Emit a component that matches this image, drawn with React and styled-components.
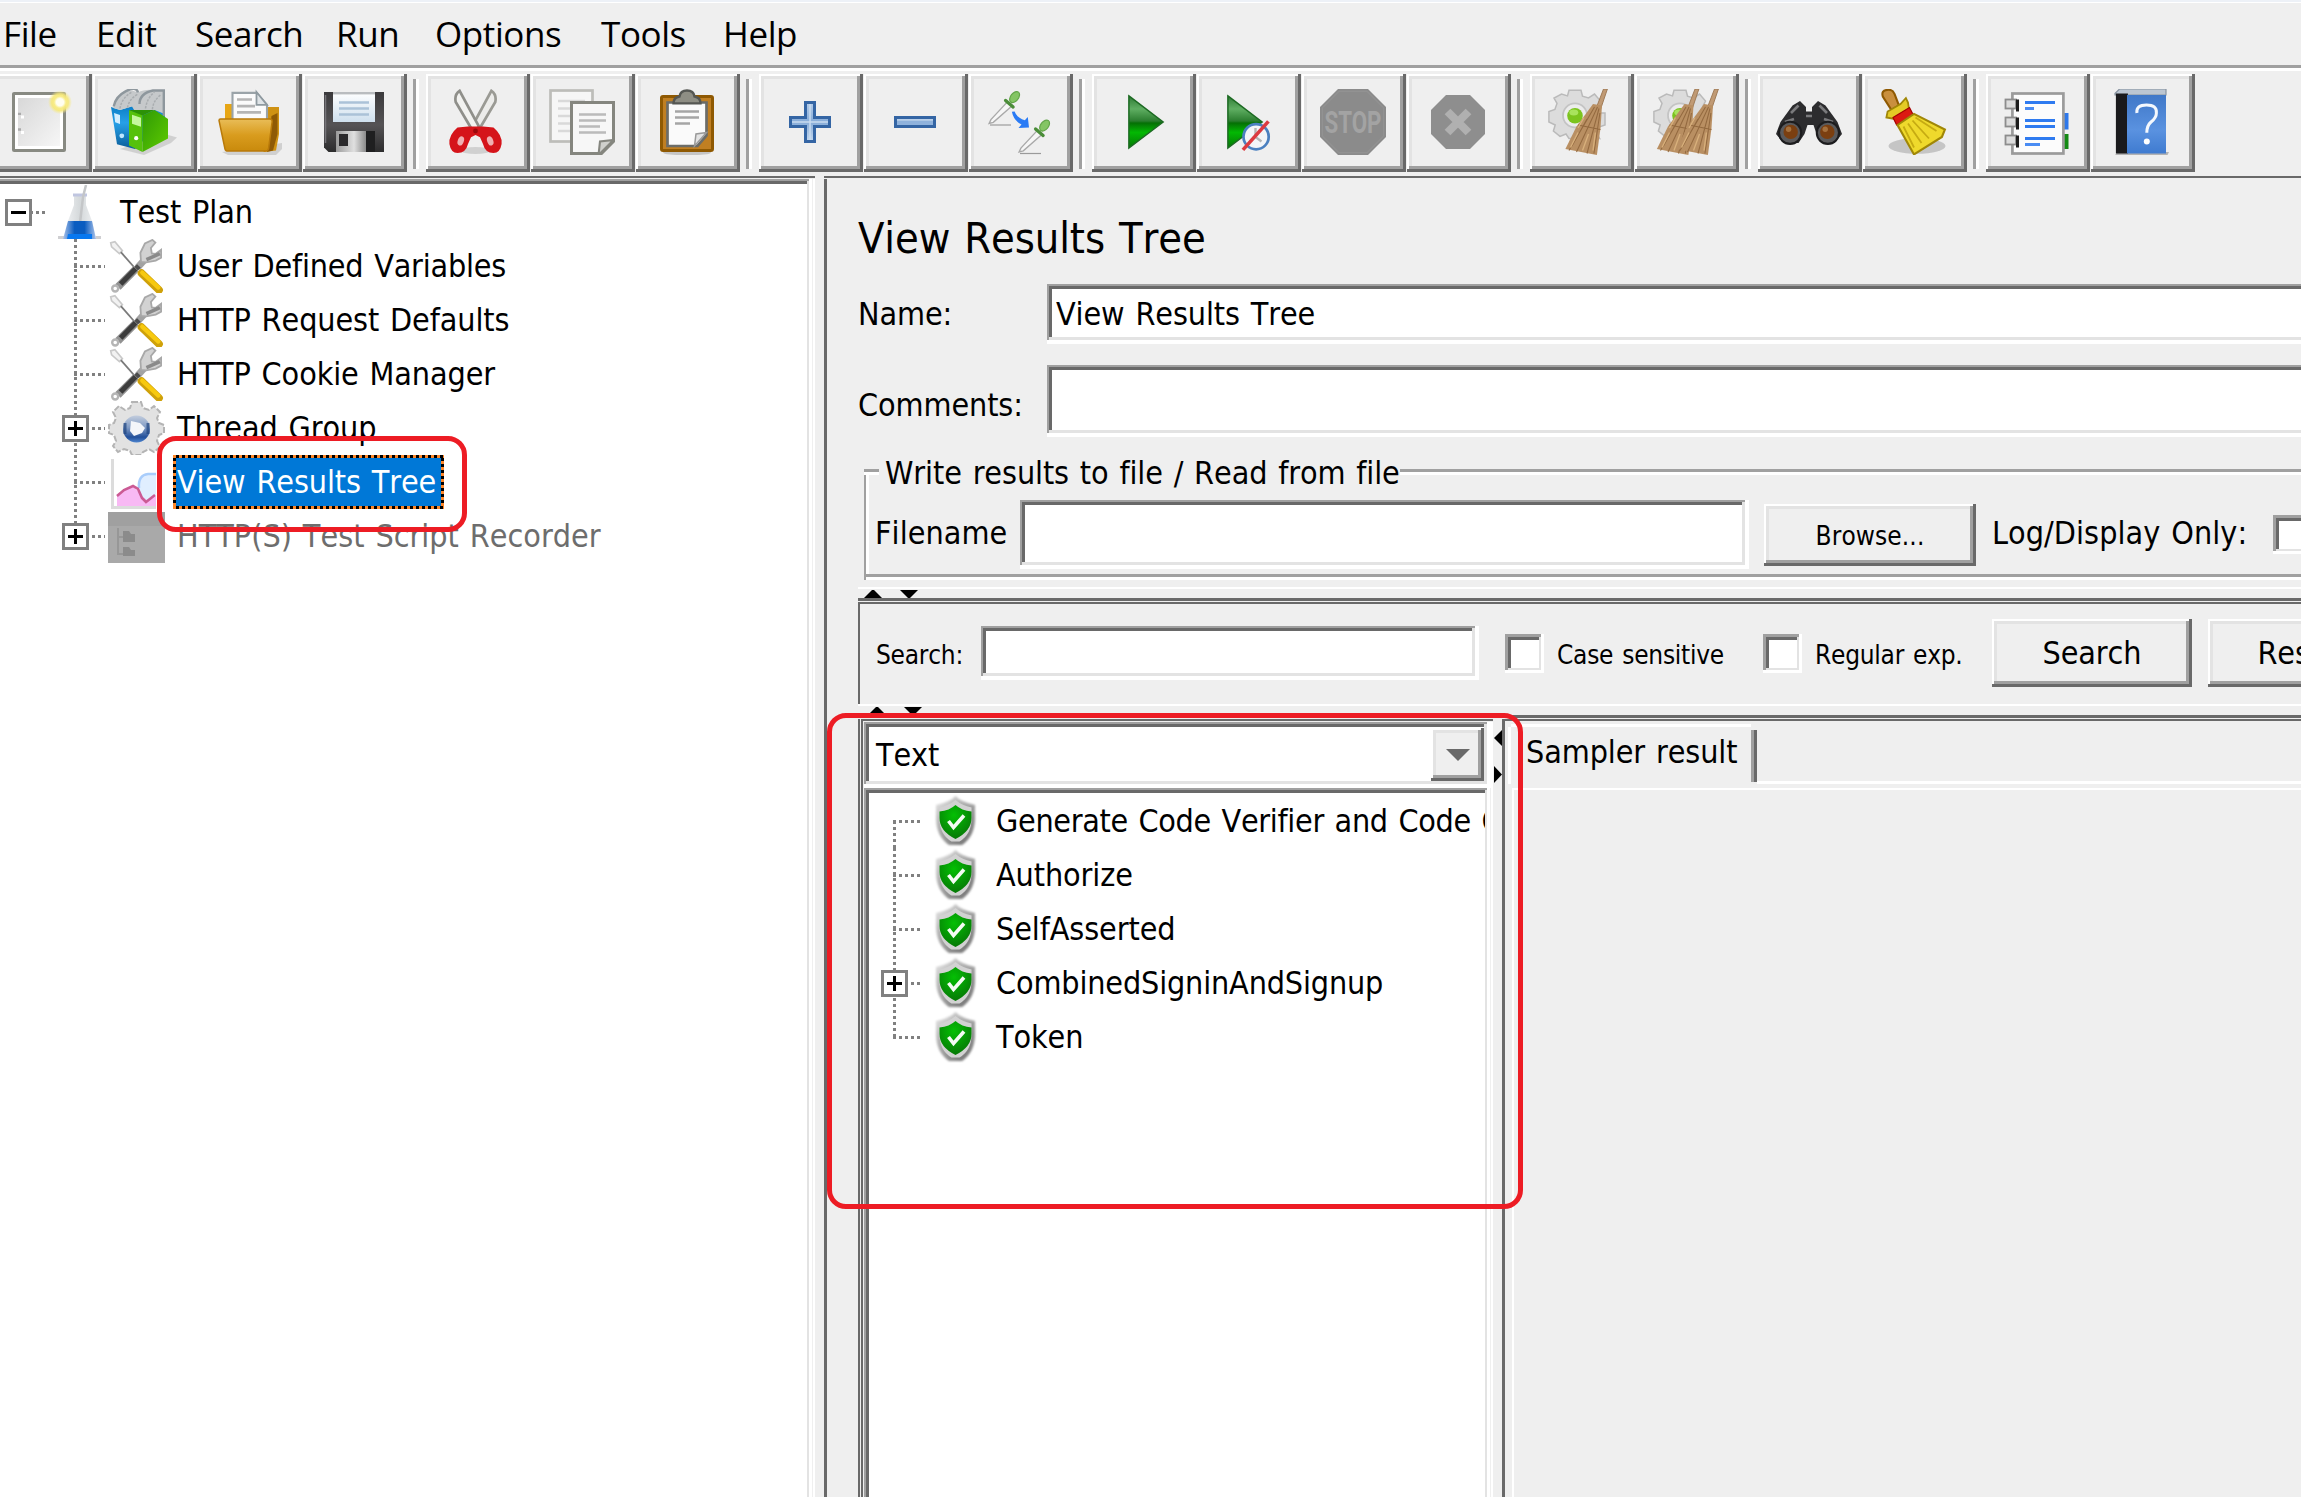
import React from "react";
import styled, { createGlobalStyle, css } from "styled-components";

const C = {
  face: "#efefef",
  light: "#ffffff",
  soft: "#e3e3e3",
  mid: "#a0a0a0",
  dark: "#696969",
  line: "#808080",
  red: "#ed1c24",
  select: "#0078d7",
};

const raised = css`
  background: ${C.face};
  box-shadow: inset -3px -3px 0 ${C.dark}, inset 2px 2px 0 ${C.light},
    inset -6px -6px 0 ${C.mid}, inset 5px 5px 0 ${C.soft};
`;
const sunken = css`
  background: #fff;
  box-shadow: inset -4px -4px 0 ${C.light}, inset 2px 2px 0 ${C.mid},
    inset -7px -7px 0 ${C.soft}, inset 5px 5px 0 ${C.dark};
`;

const Global = createGlobalStyle`
  html, body { margin: 0; padding: 0; background: #fff; overflow: hidden; }
  * { box-sizing: border-box; }
  svg { display: block; flex: none; }
`;

const Window = styled.div`
  width: 2301px;
  height: 1497px;
  overflow: hidden;
  display: flex;
  flex-direction: column;
  background: ${C.face};
  color: #000;
  font: 32px/54px "DejaVu Sans Condensed", "DejaVu Sans", sans-serif;
  font-stretch: condensed;
  font-kerning: none;
  letter-spacing: -0.1px;
  word-spacing: 1.8px;
  white-space: pre;
`;

/* ---------- menu ---------- */
const MenuBar = styled.nav`
  height: 71px;
  flex: none;
  display: flex;
  border-top: 2px solid #edf1f7;
  box-shadow: inset 0 1px 0 #fff, inset 0 -3px 0 #fff, inset 0 -6px 0 ${C.mid};
  font: 35px/63px "Open Sans", "Noto Sans", sans-serif;
  letter-spacing: -0.4px;
  padding-left: 3px;
`;
const MenuItem = styled.span`
  width: ${(p) => p.$w}px;
  flex: none;
`;

/* ---------- toolbar ---------- */
const ToolBar = styled.div`
  height: 105px;
  flex: none;
  display: flex;
  align-items: flex-start;
  padding-top: 3px;
  margin-left: -12px;
`;
const ToolGroup = styled.div`
  display: flex;
  gap: 1px;
`;
const ToolButton = styled.button`
  ${raised}
  width: 104px;
  height: 98px;
  border: 0;
  padding: 15px 20px 17px 18px;
`;
const ToolSeparator = styled.div`
  width: 6px;
  height: 90px;
  margin: 5px 7px 0 6px;
  background: linear-gradient(90deg, ${C.mid} 50%, #fff 50%);
`;

/* ---------- main split ---------- */
const Main = styled.div`
  flex: 1;
  display: flex;
  gap: 9px;
  min-height: 0;
`;
const TreePane = styled.div`
  width: 815px;
  flex: none;
  border-top: 2px solid ${C.dark};
  padding-top: 1px;
`;
const TreeScroll = styled.div`
  height: 100%;
  background: #fff;
  padding-top: 6px;
  box-shadow: inset -2px 0 0 #fff, inset -3px 0 0 ${C.face}, inset -6px 0 0 #fff,
    inset 0 2px 0 ${C.mid}, inset -8px 0 0 ${C.soft}, inset 0 5px 0 ${C.dark};
`;
const dots = (dir) =>
  `repeating-linear-gradient(${dir}, ${C.line} 0 3px, transparent 3px 6px)`;
const TreeRow = styled.div`
  height: 54px;
  display: flex;
  align-items: center;
  padding-left: ${(p) => p.$indent || 0}px;
`;
const Gutter = styled.div`
  width: ${(p) => p.$w}px;
  height: 54px;
  flex: none;
  display: flex;
  align-items: center;
  background-repeat: no-repeat;
  background-image: ${dots("90deg")}, ${dots("180deg")};
  background-size: ${(p) => p.$reach}px 3px,
    3px ${(p) => (p.$part === "none" ? "0" : p.$part ? "27px" : "54px")};
  background-position: 12px 26px, 12px ${(p) => (p.$part === "first" ? "27px" : "0")};
`;
const Expander = styled.span`
  width: 27px;
  height: 27px;
  border: 3px solid ${C.line};
  background: linear-gradient(#000, #000) center / 15px 3px no-repeat,
    ${(p) => (p.$open ? "" : "linear-gradient(#000, #000) center / 3px 15px no-repeat,")}
    linear-gradient(#fff, #fff);
`;
const RootGutter = styled(Gutter)`
  background-position: 13px 26px, 0 0;
`;
const NodeLabel = styled.span`
  margin-left: ${(p) => p.$gap ?? 8}px;
  padding: 0 3px 0 4px;
  height: 54px;
  color: ${(p) => (p.$muted ? "#6d6d6d" : "#000")};
  letter-spacing: ${(p) => (p.$ls === undefined ? "inherit" : p.$ls + "px")};
`;
const ddash = (dir) =>
  `repeating-linear-gradient(${dir}, #ff8728 0 3px, #000 3px 6px)`;
const SelectedLabel = styled(NodeLabel)`
  color: #fff;
  width: 271px;
  background: ${ddash("90deg")} 0 0 / 100% 3px no-repeat,
    ${ddash("90deg")} 0 100% / 100% 3px no-repeat,
    ${ddash("180deg")} 0 0 / 3px 100% no-repeat,
    ${ddash("180deg")} 100% 0 / 3px 100% no-repeat, ${C.select};
`;

/* ---------- detail pane ---------- */
const Detail = styled.main`
  flex: 1;
  min-width: 0;
  overflow: hidden;
  border-top: 2px solid ${C.dark};
  display: flex;
`;
const DetailEdge = styled.div`
  width: 3px;
  margin: 1px 31px 0 0;
  background: ${C.dark};
  flex: none;
`;
const DetailBody = styled.div`
  flex: 1;
  min-width: 0;
  display: flex;
  flex-direction: column;
`;
const Title = styled.h1`
  margin: 30px 0 16px;
  font: inherit;
  font-kerning: none;
  font-size: 43px;
  line-height: 60px;
`;
const FormRow = styled.div`
  display: flex;
  align-items: center;
  height: ${(p) => p.$h}px;
  margin-bottom: ${(p) => p.$mb}px;
  flex: none;
`;
const FormLabel = styled.label`
  width: 189px;
  flex: none;
  padding-top: ${(p) => p.$drop || 0}px;
`;
const Field = styled.div`
  ${sunken}
  height: ${(p) => p.$h}px;
  width: ${(p) => (p.$w ? p.$w + "px" : "auto")};
  flex: ${(p) => (p.$w ? "none" : "1")};
  margin-right: ${(p) => p.$mr ?? (p.$w ? 0 : -20)}px;
  padding-left: 9px;
  line-height: ${(p) => p.$h}px;
`;
const Group = styled.section`
  margin: 0 -20px 0 6px;
  flex: none;
`;
const GroupHead = styled.div`
  display: flex;
  height: 6px;
  line-height: 9px;
`;
const Rule = styled.span`
  height: 6px;
  width: ${(p) => (p.$w ? p.$w + "px" : "auto")};
  flex: ${(p) => (p.$w ? "none" : "1")};
  background: linear-gradient(${C.mid} 50%, #fff 50%);
`;
const GroupTitle = styled.span`
  width: 521px;
  flex: none;
  padding-left: 6px;
`;
const GroupBody = styled.div`
  height: 105px;
  border-left: 2px solid ${C.mid};
  box-shadow: inset 0 -3px 0 #fff, inset 0 -6px 0 ${C.mid}, inset 3px 0 0 #fff;
  padding: 25px 0 11px 9px;
  display: flex;
  align-items: center;
`;
const Cell = styled.span`
  width: ${(p) => p.$w}px;
  flex: none;
  font-size: ${(p) => (p.$small ? 26 : 32)}px;
  padding: ${(p) => (p.$small ? "4px 0 0" : "0 0 3px")};
  letter-spacing: ${(p) => (p.$small ? -0.25 : 0.05)}px;
`;
const PushButton = styled.button`
  ${raised}
  width: ${(p) => p.$w}px;
  height: ${(p) => p.$h}px;
  flex: none;
  border: 0;
  padding: ${(p) => (p.$small ? 3 : 0)}px 0 0;
  margin-right: ${(p) => p.$mr}px;
  font: inherit;
  font-kerning: none;
  font-size: ${(p) => (p.$small ? 26 : 32)}px;
  line-height: 54px;
  letter-spacing: ${(p) => (p.$small ? 0.1 : -0.1)}px;
  color: #000;
`;
const Check = styled.span`
  width: 39px;
  height: 39px;
  flex: none;
  margin-right: ${(p) => p.$mr || 0}px;
  background: #fff;
  box-shadow: inset -3px -3px 0 #fff, inset 3px 3px 0 ${C.mid},
    inset -5px -5px 0 ${C.soft}, inset 6px 6px 0 ${C.dark};
`;
const Splitter = styled.div`
  height: ${(p) => p.$h}px;
  flex: none;
  display: flex;
  align-items: flex-end;
  border-bottom: 3px solid ${C.dark};
  padding-left: ${(p) => p.$pad}px;
  margin-bottom: 1px;
  background: linear-gradient(#fff, #fff) 0 ${(p) => p.$line}px / 100% 2px no-repeat;
`;
const SearchBar = styled.div`
  height: 102px;
  flex: none;
  border-top: 2px solid ${C.dark};
  border-left: 2px solid ${C.dark};
  margin-right: -20px;
  padding: 0 0 2px 16px;
  display: flex;
  align-items: center;
`;
const Results = styled.div`
  flex: 1;
  min-height: 0;
  display: flex;
  border-left: 2px solid ${C.dark};
  padding-left: 1px;
`;
const ResultList = styled.div`
  width: 632px;
  flex: none;
  border-top: 2px solid ${C.dark};
  border-left: 2px solid ${C.dark};
  padding: 1px 0 0 1px;
  display: flex;
  flex-direction: column;
`;
const Combo = styled.div`
  ${sunken}
  box-shadow: inset -6px -4px 0 #fff, inset 2px 2px 0 ${C.mid},
    inset -9px -7px 0 ${C.soft}, inset 5px 5px 0 ${C.dark};
  height: 66px;
  flex: none;
  padding: 6px 9px 7px 12px;
  display: flex;
  justify-content: space-between;
`;
const ComboButton = styled.span`
  ${raised}
  width: 53px;
  height: 53px;
  display: flex;
  align-items: center;
  justify-content: center;
`;
const ResultTree = styled.div`
  flex: 1;
  background: #fff;
  padding: 6px 0 0;
  margin-bottom: -8px;
  box-shadow: inset -2px 0 0 #fff, inset -3px 0 0 ${C.face}, inset -6px 0 0 #fff,
    inset 2px 0 0 ${C.mid}, inset 0 2px 0 ${C.mid}, inset -8px 0 0 ${C.soft},
    inset 5px 5px 0 ${C.dark};
`;
const ResultClip = styled.div`
  width: 621px;
  overflow: hidden;
`;
const SideSplitter = styled.div`
  width: 9px;
  flex: none;
  padding: 11px 0 0 1px;
  display: flex;
  flex-direction: column;
  gap: 19px;
`;
const Sampler = styled.div`
  flex: 1;
  min-width: 0;
  border-top: 2px solid ${C.dark};
  border-left: 3px solid ${C.dark};
  padding: 3px 0 0 3px;
  display: flex;
  flex-direction: column;
`;
const TabStrip = styled.div`
  display: flex;
  height: 60px;
  flex: none;
`;
const Tab = styled.div`
  width: 249px;
  flex: none;
  padding: 1px 0 0 18px;
  background: linear-gradient(#fff, #fff) 3px 0 / 240px 3px no-repeat,
    linear-gradient(#fff, #fff) 0 3px / 3px 100% no-repeat,
    linear-gradient(90deg, ${C.mid} 50%, ${C.dark} 50%) 243px 6px / 6px 52px no-repeat;
`;
const TabRest = styled.div`
  flex: 1;
  border-bottom: 3px solid #fff;
`;
const TabBody = styled.div`
  flex: 1;
  margin: 4px 0 0 4px;
  border-top: 2px solid #fff;
  border-left: 2px solid #fff;
`;
const Callout = styled.div`
  position: absolute;
  left: ${(p) => p.$x}px;
  top: ${(p) => p.$y}px;
  width: ${(p) => p.$w}px;
  height: ${(p) => p.$h}px;
  border: 5px solid ${C.red};
  border-radius: 19px;
`;

/* ---------- toolbar artwork, 22-unit grid ---------- */
const Art = ({ children }) => (
  <svg width="66" height="66" viewBox="0 0 22 22">{children}</svg>
);
const NewIcon = () => (
  <Art>
    <defs>
      <linearGradient id="pg" x1="0" y1="0" x2="1" y2="1"><stop offset="0" stopColor="#d8d8d8" /><stop offset="1" stopColor="#f6f6f6" /></linearGradient>
      <radialGradient id="glow"><stop offset="0.3" stopColor="#fffef0" /><stop offset="0.5" stopColor="#f8ec86" /><stop offset="0.7" stopColor="#f6e878" stopOpacity="0.9" /><stop offset="1" stopColor="#f6ea8a" stopOpacity="0" /></radialGradient>
    </defs>
    <rect x="2.5" y="1.5" width="17" height="19" fill="#fff" stroke="#888a82" rx="0.2" />
    <rect x="4" y="3" width="14" height="16" fill="url(#pg)" />
    <path d="M4 8.3h1M4 13.5h1" stroke="#aaa" strokeWidth="0.8" />
    <path d="M5 9.3h1M5 14.5h1" stroke="#fff" strokeWidth="1" />
    <circle cx="18" cy="4.4" r="4" fill="url(#glow)" />
  </Art>
);
const TemplatesIcon = () => (
  <Art>
    <defs>
      <linearGradient id="gr" x1="0" y1="0" x2="1" y2="1"><stop offset="0" stopColor="#2f9a05" /><stop offset="1" stopColor="#5fcb00" /></linearGradient>
      <linearGradient id="bl" x1="0" y1="0" x2="0" y2="1"><stop offset="0" stopColor="#0a7cc4" /><stop offset="0.4" stopColor="#27a0e8" /><stop offset="1" stopColor="#0b5d99" /></linearGradient>
    </defs>
    <path d="M18 15l4 1.2-2 1.8-9 4-8-2z" fill="#999" opacity="0.35" />
    <path d="M0 6l3 1 5-1.6 4 1 6-1V10L8 20l-6-1.6z" fill="url(#bl)" />
    <path d="M.7 6.300Q1 3 4.500.6 7 .2 9 1.200 11 0 14.500.3h3V8.200L14.500 7 10.500 8.500 8 7.500 7 5.800 3 7z" fill="#c6c9cb" />
    <path d="M.9 5.800Q1.500 2.500 5 .7T9 1.200M9.500 5Q9.500 1.500 14 .5h3.600V9" stroke="#8e979d" strokeWidth="0.800" fill="none" />
    <path d="M3 6.500Q3.500 3 7 1M5.500 6.200Q6 3.500 8.800 1.800M11.500 6.500Q12 3 14.500 1M13.800 6.800Q14 4 16.500 2" stroke="#a9adb0" strokeWidth="0.500" fill="none" strokeDasharray=".8 .4" />
    <path d="M1 8l2 .7v3l-1.600-.6z" fill="#d2eeff" />
    <circle cx="3.600" cy="15.600" r="0.800" fill="#bfe6ff" />
    <path d="M6 7l4.500 1.500V21L6 18.800z" fill="#55c10c" />
    <path d="M7 8.600l3 1v3l-3-1z" fill="#c4f7a0" />
    <circle cx="8.400" cy="16.400" r="0.700" fill="#fff" />
    <path d="M6 7l8.500 0L10.500 8.800z" fill="#2c9206" />
    <path d="M10.500 8.800l4-1.800 4.500 3v6.500L10.500 21z" fill="url(#gr)" />
  </Art>
);
const OpenIcon = () => (
  <Art>
    <defs>
      <linearGradient id="fo" x1="0" y1="0" x2="0" y2="1"><stop offset="0" stopColor="#e9bd58" /><stop offset="0.5" stopColor="#d99c1e" /><stop offset="1" stopColor="#c98a0c" /></linearGradient>
    </defs>
    <path d="M2 21l2 1h16l2-2v-2z" fill="#888" opacity="0.3" />
    <path d="M3 5h3v5h8V6h7v9l-1 5.500-4 .5z" fill="#cf9213" />
    <path d="M3 5h2.500v5H3z" fill="#e7a615" />
    <path d="M18.500 9l2-1v7l-1.500 5.500-2 .5z" fill="#8f5a05" />
    <path d="M5.500 1.300h8l3.500 4V11H5.500z" fill="#fbfbfb" stroke="#9aa3a8" strokeWidth="0.700" />
    <path d="M13.500 1v4.300H17z" fill="#dfe4e7" stroke="#8f9aa0" strokeWidth="0.600" />
    <path d="M7 3.500h5M7 5.700h6M7 7.800h8" stroke="#b5b5b5" strokeWidth="0.900" />
    <path d="M1 10.500q0-.5.500-.5h16.500q.8 0 .7 1l-1.200 9q-.2.700-1 .7H4q-.8 0-1-.7z" fill="url(#fo)" stroke="#b97a0a" strokeWidth="0.500" />
  </Art>
);
const SaveIcon = () => (
  <Art>
    <defs>
      <linearGradient id="sv" x1="0" y1="0" x2="0" y2="1"><stop offset="0" stopColor="#3b3a3c" /><stop offset="0.550" stopColor="#555355" /><stop offset="1" stopColor="#2c2c2d" /></linearGradient>
      <linearGradient id="mt" x1="0" y1="0" x2="1" y2="0"><stop offset="0" stopColor="#9a9a9a" /><stop offset="0.600" stopColor="#e0e0e0" /><stop offset="1" stopColor="#8a8a8a" /></linearGradient>
      <linearGradient id="lb" x1="0" y1="0" x2="0" y2="1"><stop offset="0" stopColor="#fff" /><stop offset="1" stopColor="#cfe0ee" /></linearGradient>
    </defs>
    <path d="M1 1h20v20H2.500L1 19.500z" fill="url(#sv)" />
    <path d="M1.500 2v16" stroke="#77757a" strokeWidth="0.500" />
    <rect x="4" y="1" width="14" height="10" fill="url(#lb)" />
    <rect x="4" y="1" width="14" height="0.800" fill="#b9bcbf" />
    <path d="M6 4.500h10M6 6.500h10M6 8.500h10" stroke="#abc2d8" strokeWidth="0.900" />
    <rect x="5" y="14" width="10" height="7" fill="url(#mt)" />
    <rect x="6" y="15" width="3" height="4" fill="#2a292b" />
    <rect x="15" y="14" width="3" height="7" fill="#1f1f20" />
  </Art>
);
const CutIcon = () => (
  <Art>
    <ellipse cx="10.500" cy="20.500" rx="5" ry="1.200" fill="#999" opacity="0.350" />
    <path d="M15.800.6q1.800 1.200 1.300 3.700L11.400 14 9.300 12.600z" fill="#ececea" stroke="#9a9a94" strokeWidth="0.900" />
    <path d="M5.200.6Q3.400 1.800 3.900 4.300L9.600 14l2.100-1.400z" fill="#f2f2f0" stroke="#8f8f8a" strokeWidth="0.900" />
    <path d="M8 12.500h5l3.500 .3q3 2.500 2.700 5.500-.5 3-2.700 3-2.800 0-3.500-3l-1-2.200-1.500-.8-1.500.8-1 2.200q-.700 3-3.500 3-2.200 0-2.700-3-.3-3 2.700-5.500z" fill="#d5141a" />
    <ellipse cx="5.600" cy="17.300" rx="1" ry="1.600" fill="#efb0b2" transform="rotate(20 5.600 17.300)" />
    <ellipse cx="15.400" cy="17.300" rx="1" ry="1.600" fill="#efb0b2" transform="rotate(-20 15.400 17.300)" />
    <circle cx="10.500" cy="14" r="0.800" fill="#9c080c" />
  </Art>
);
const CopyIcon = () => (
  <Art>
    <rect x="0.500" y="0.500" width="14" height="17" fill="#f6f6f6" stroke="#bdbdb9" strokeWidth="0.900" />
    <path d="M3 4h9M3 6.500h9M3 9h4M3 11.500h4M3 14h4" stroke="#d9d9d9" strokeWidth="0.900" />
    <path d="M7.500 4.500h14v13l-4 4h-10z" fill="#f7f7f7" stroke="#85867f" />
    <path d="M10 8.500h9M10 10.500h9M10 12.500h7M10 14.500h9" stroke="#bbb" strokeWidth="0.800" />
    <path d="M16.500 22l.5-4.500 4.500-.5z" fill="#cfd0cc" stroke="#85867f" strokeWidth="0.700" />
  </Art>
);
const PasteIcon = () => (
  <Art>
    <ellipse cx="11" cy="21.200" rx="8" ry="0.900" fill="#888" opacity="0.400" />
    <rect x="2.500" y="2.500" width="17" height="18" rx="0.500" fill="#c07f22" stroke="#8f5902" />
    <path d="M4.500 4.500h13v11l-3 3.500h-10z" fill="#fafafa" stroke="#6b6c68" strokeWidth="0.900" />
    <path d="M7 7.500h8M7 9.500h8M7 11.500h5" stroke="#a5a5a5" strokeWidth="0.900" />
    <path d="M13.500 19l.5-4 3.500-.5z" fill="#e3e3e3" stroke="#999" strokeWidth="0.500" />
    <path d="M6.500 4.800q0-2 2-2.300 .3-2 2.500-2t2.500 2q2 .3 2 2.300z" fill="#8e8e84" stroke="#555753" strokeWidth="0.800" />
  </Art>
);
const PlusIcon = () => (
  <Art>
    <defs>
      <linearGradient id="pb" x1="0" y1="0" x2="0" y2="1"><stop offset="0" stopColor="#b4cce8" /><stop offset="0.500" stopColor="#87acd8" /><stop offset="1" stopColor="#c4d8ee" /></linearGradient>
    </defs>
    <path d="M9.500 4.500h3v5h5v3h-5v5h-3v-5h-5v-3h5z" fill="url(#pb)" stroke="#3465a4" />
    <path d="M11 5v12M5 11h12" stroke="#c9dbf0" strokeWidth="0.500" />
  </Art>
);
const MinusIcon = () => (
  <Art>
    <rect x="4.500" y="9.500" width="13" height="3" fill="#8fb2dc" stroke="#3465a4" />
    <path d="M5 10.300h12" stroke="#b9cfe9" strokeWidth="0.600" />
  </Art>
);
const Dropper = ({ x, y }) => (
  <g transform={`translate(${x} ${y})`}>
    <path d="M0.500 11.500h7" stroke="#9a9a9a" strokeWidth="0.400" />
    <path d="M6.300 3.800L.8 9.700 .2 11l1.400-.4L7.800 5.200z" fill="#f6f6f6" stroke="#a9a9a9" strokeWidth="0.450" />
    <path d="M5.700 3.300l2.500 2.200" stroke="#4a8c38" strokeWidth="1.100" strokeLinecap="round" />
    <ellipse cx="8.700" cy="2.200" rx="1.300" ry="2.100" transform="rotate(38 8.700 2.200)" fill="#84c564" stroke="#62a548" strokeWidth="0.400" />
  </g>
);
const ToggleIcon = () => (
  <Art>
    <Dropper x={0.5} y={0.500} />
    <Dropper x={10.500} y={10} />
    <path d="M8.300 7.600q.6 3 3.200 4.200l-1 1.200 3.500-.2-.4-3.500-1 1.100Q10 9.700 9.200 7.500z" fill="#2a7bf5" />
  </Art>
);
const greenDefs = (id) => (
  <linearGradient id={id} x1="0" y1="0" x2="0" y2="1"><stop offset="0" stopColor="#2f7a35" /><stop offset="0.250" stopColor="#5fae62" /><stop offset="0.480" stopColor="#2b7d2f" /><stop offset="0.520" stopColor="#057005" /><stop offset="0.700" stopColor="#03b803" /><stop offset="1" stopColor="#047804" /></linearGradient>
);
const RunIcon = () => (
  <Art>
    <defs>{greenDefs("g1")}</defs>
    <path d="M6.300 2.300L17.700 11 6.300 19.700z" fill="url(#g1)" stroke="#1c6a22" strokeWidth="0.500" />
  </Art>
);
const RunNowIcon = () => (
  <Art>
    <defs>{greenDefs("g2")}</defs>
    <path d="M4.300 2.300L15.700 11 4.300 19.700z" fill="url(#g2)" stroke="#1c6a22" strokeWidth="0.500" />
    <circle cx="13.700" cy="15.900" r="4.200" fill="#f3f5f8" stroke="#4b80c0" strokeWidth="0.900" />
    <path d="M13.500 13v3l2 1.500" stroke="#b5b5b5" strokeWidth="0.800" fill="none" />
    <path d="M9.300 20.300l8.500-9.500" stroke="#dc3a40" strokeWidth="1.200" />
  </Art>
);
const StopIcon = () => (
  <Art>
    <path d="M6 0h10l6 6v10l-6 6H6l-6-6V6z" fill="#8b8b8b" />
    <path d="M6.300.8h9.400l5.500 5.500v9.400l-5.500 5.500H6.300L.8 15.700V6.300z" fill="none" stroke="#929292" strokeWidth="0.400" />
    <text x="1.500" y="14.800" fontFamily="Roboto, sans-serif" fontWeight="700" fontSize="10.500" textLength="19" lengthAdjust="spacingAndGlyphs" letterSpacing="0" fill="#a3a3a3">STOP</text>
  </Art>
);
const ShutdownIcon = () => (
  <Art>
    <path d="M7 2h8l5 5v8l-5 5H7l-5-5V7z" fill="#8e8e8e" />
    <path d="M7.500 7.500l7 7M14.500 7.500l-7 7" stroke="#b0b0b0" strokeWidth="2.700" />
  </Art>
);
const Gear = () => (
  <g>
    <path d="M7 .4h4l.5 2 2 .6 2-1.300 2 2.300-1 2 .8 2H19v4l-2 .7-.8 2 1 1.800L14.500 16l-2-.8-1.500 1.300H7L6 15l-2 .8L1.800 14l.6-2L.3 11V7.500l2-.7.7-2L2 3l2.500-1.300 2 .6z" fill="#dcdcdc" stroke="#bababa" strokeWidth="0.500" />
    <circle cx="9" cy="8.800" r="4" fill="#ececec" stroke="#c4c4c4" strokeWidth="0.600" />
    <circle cx="9" cy="8.900" r="2.600" fill="#7cc41e" />
    <ellipse cx="8.600" cy="7.800" rx="1.500" ry="1" fill="#a9e35d" />
  </g>
);
const Besom = ({ x = 0 }) => (
  <g transform={`translate(${x} 0)`}>
    <path d="M19.800 0h-1.300L16 6.500l1.500.3z" fill="#c09a74" stroke="#9a7550" strokeWidth="0.300" />
    <path d="M15 5l3 .5L17.500 13 16.300 22 5.800 20 9.500 12.500z" fill="#b98f62" />
    <path d="M10 12l7.500 1.500M15.500 6L7 20.500M16.500 6l-7 15M17 6.500l-4 15M17.300 8l-2 13.500M13 10l-5 9" stroke="#93693f" strokeWidth="0.340" fill="none" />
    <path d="M10 14.500l-2.500 5M13.500 15l-2 5.500M15.800 14.500l-.8 6M12 9.500l-2 3.500" stroke="#d8b07c" strokeWidth="0.450" />
  </g>
);
const ClearIcon = () => (<Art><Gear /><Besom /></Art>);
const ClearAllIcon = () => (<Art><Gear /><Besom x={-4.5} /><Besom x={2} /></Art>);
const FindIcon = () => (
  <Art>
    <path d="M5.500 5.500L8 4l2 2v1.500h2V6l2-2 2.500 1.500L20.500 11l1.500 4-2.500 3h-4l-2-3-1-3h-2l-1 3-2 3H2.500L0 15l1.500-4z" fill="#2c2c2e" />
    <path d="M5 8l2.500-2.500M17 8l-2.500-2.500M3 11l3-1M19 11l-3-1M10 9h2" stroke="#7a7a7c" strokeWidth="0.900" />
    <circle cx="4.700" cy="14.600" r="3.700" fill="#5a5a5c" stroke="#1c1c1e" strokeWidth="0.700" />
    <circle cx="17.300" cy="14.600" r="3.700" fill="#5a5a5c" stroke="#1c1c1e" strokeWidth="0.700" />
    <circle cx="4.900" cy="14.300" r="2.400" fill="#7b3f10" />
    <circle cx="17.100" cy="14.300" r="2.400" fill="#7b3f10" />
    <circle cx="4.200" cy="13.400" r="0.900" fill="#a5703c" />
    <circle cx="16.400" cy="13.400" r="0.900" fill="#a5703c" />
  </Art>
);
const BroomIcon = () => (
  <Art>
    <ellipse cx="12" cy="19" rx="9.500" ry="2.600" fill="#777" opacity="0.350" />
    <path d="M.6 2.500Q0 .5 2 .3 3.800 0 4.500 1.600L6 5.500 3.500 7z" fill="#c98f3e" stroke="#8f5902" strokeWidth="0.700" />
    <path d="M1.800 9.500l.4-2L6.500 5l1.800-2L9 4.500 9.300 6.500 4.500 10z" fill="#e4cb25" stroke="#a08707" strokeWidth="0.600" />
    <path d="M4 9.500l5.500-3.300 1.200 2.300-5.500 3.500z" fill="#dc1a12" stroke="#a40000" strokeWidth="0.400" />
    <path d="M5.500 12l5.500-3.700 10.300 5.200-1 2.500-9.300 5.800z" fill="#efd92c" stroke="#a08707" strokeWidth="0.700" />
    <path d="M7.500 12.500l3.500 7M9 11.500l4.500 6.500M10.500 10.500l5.500 6M11.500 9.500l7 4.500" stroke="#c6ab12" strokeWidth="0.600" />
  </Art>
);
const FunctionsIcon = () => (
  <Art>
    <rect x="20" y="8" width="1.500" height="5.500" fill="#2e78ea" />
    <rect x="20" y="15" width="1.500" height="5" fill="#148a14" />
    <rect x="2.800" y="1.500" width="17" height="20" fill="#fcfcfc" stroke="#9b9b9b" strokeWidth="0.900" />
    {[3.5, 9.5, 15.5].map((y) => (
      <g key={y}>
        <rect x="0.500" y={y} width="3.500" height="3" fill="#ddd" stroke="#8d8d8d" strokeWidth="0.600" />
        <rect x="4" y={y} width="1" height="4" fill="#1c1c1c" />
      </g>
    ))}
    <path d="M7 4.500h10M7 10.500h10M7 12.500h10M7 16.500h10" stroke="#2f7bf0" strokeWidth="1" />
    <path d="M7 6.500h3M7 18.500h5" stroke="#4a8cf3" strokeWidth="1" />
  </Art>
);
const HelpIcon = () => (
  <Art>
    <defs>
      <linearGradient id="hb" x1="0" y1="0" x2="0" y2="1"><stop offset="0" stopColor="#4078c8" /><stop offset="0.600" stopColor="#5a92e0" /><stop offset="1" stopColor="#3f7bd0" /></linearGradient>
    </defs>
    <path d="M2 22h17.500l.5-1H3z" fill="#777" opacity="0.500" />
    <path d="M2 1.500L3.500 0H19v2H2z" fill="#bcc6d2" stroke="#8893a0" strokeWidth="0.400" />
    <rect x="2.300" y="1.500" width="4" height="20" fill="#1a1a1c" />
    <rect x="6" y="2" width="13" height="19.500" fill="url(#hb)" />
    <path d="M9.300 8Q9 5.300 12.500 5.300T15.800 8q0 1.600-1.800 3-1.400 1.200-1.400 3.600" fill="none" stroke="#f4f8fd" strokeWidth="1" />
    <circle cx="12.600" cy="17.500" r="1" fill="#fff" />
  </Art>
);

/* ---------- tree artwork ---------- */
const FlaskIcon = () => (
  <svg width="45" height="54" viewBox="0 0 45 54">
    <defs>
      <linearGradient id="fl" x1="0" y1="0" x2="1" y2="0"><stop offset="0" stopColor="#a9c2ea" /><stop offset="0.350" stopColor="#0a5cc0" /><stop offset="0.650" stopColor="#0a5cc0" /><stop offset="1" stopColor="#a9c2ea" /></linearGradient>
      <linearGradient id="fg" x1="0" y1="0" x2="1" y2="0"><stop offset="0" stopColor="#f1f3f5" /><stop offset="0.500" stopColor="#d4d8da" /><stop offset="1" stopColor="#f1f3f5" /></linearGradient>
    </defs>
    <path d="M0 52.500h43" stroke="#cfcfd2" strokeWidth="3" />
    <path d="M16 10h12v10l6 16 4 17H6l4-17 6-16z" fill="url(#fg)" />
    <path d="M15 10h14" stroke="#c0c6e0" strokeWidth="3" />
    <path d="M28 0l-3 12-3 26" stroke="#c4c6c8" strokeWidth="2.500" fill="none" />
    <path d="M10 36h24l4 18H5z" fill="url(#fl)" />
    <path d="M10 49h24v5H9z" fill="#0878f0" />
  </svg>
);
const ToolsIcon = () => (
  <svg width="57" height="54" viewBox="0 0 19 18">
    <path d="M.9 1.300L2.300.9 4.800 3.900 3.800 4.900 1.200 2.600z" fill="#f2f2f2" stroke="#c9c9c9" strokeWidth="0.550" />
    <path d="M4.300 4.400l4.500 5.100" stroke="#7a7a7a" strokeWidth="0.600" />
    <path d="M9.800 9.600L12.300 6.800" stroke="#a2a2a2" strokeWidth="2.300" />
    <path d="M11 7.600l-.2-3L12.300 1.500 14.800.3l1 .9L14.300 3l.3 1.800 1.200.2L17.700 3.600v2.600l-1.800 1-3.200.6z" fill="#d2d2d2" stroke="#a8a8a8" strokeWidth="0.600" />
    <path d="M12.800 6.900l4.500-2" stroke="#8a8a8a" strokeWidth="1.200" />
    <path d="M10.300 9L9 10.300" stroke="#4c4c4c" strokeWidth="1.700" />
    <path d="M9.400 9.900L3.300 16" stroke="#929292" strokeWidth="2.500" />
    <path d="M9.200 9.900L4.200 15" stroke="#3c3c3c" strokeWidth="1.700" />
    <circle cx="2.400" cy="16.500" r="1" fill="#fff" stroke="#b5b5b5" strokeWidth="0.800" />
    <path d="M11.200 11.400L17 17" stroke="#cfa10a" strokeWidth="2.600" strokeLinecap="round" />
    <path d="M11.400 11.200L16.800 16.200" stroke="#f7c90f" strokeWidth="1.400" strokeLinecap="round" />
  </svg>
);
const ThreadIcon = () => (
  <svg width="57" height="54" viewBox="0 0 57 54">
    <defs>
      <linearGradient id="tr" x1="0" y1="0" x2="0" y2="1"><stop offset="0" stopColor="#c3cddd" /><stop offset="0.450" stopColor="#7f9ac4" /><stop offset="0.800" stopColor="#23509a" /><stop offset="1" stopColor="#4f86d0" /></linearGradient>
    </defs>
    <path d="M24 1h9l2 6 6 2 5-4 6 6-3 6 2 5 5 2v8l-5 2-2 6 3 6-6 5-5-3-6 3-2 3h-9l-2-4-6-2-6 3-5-6 3-5-2-6-5-2v-8l5-2 2-5-3-6 6-6 6 4 5-2z" fill="#e2e2e2" stroke="#b4b4b4" strokeWidth="2" strokeDasharray="6 2" />
    <circle cx="28.500" cy="28" r="13.500" fill="url(#tr)" />
    <path d="M17 22v11M40 22v11" stroke="#1f447f" strokeWidth="3" opacity="0.700" />
    <path d="M23 20l9 2 5 5-3 5-8 3-4-5z" fill="#f4f6fa" />
  </svg>
);
const ChartIcon = () => (
  <svg width="57" height="54" viewBox="0 0 57 54">
    <path d="M4.500 4v48.500H48" fill="none" stroke="#dcdcdc" strokeWidth="3" />
    <path d="M31 31q1-12 9-12h8v21l-7 8-8-7z" fill="#e0eeff" />
    <path d="M31 33q-1-13 9-14h8" fill="none" stroke="#a9cdfb" strokeWidth="2.500" />
    <path d="M9 51V41l7-6 9-4 9 10 6 5 8-5v10z" fill="#f8b9f4" />
    <path d="M9 41l7-6 9-4 5 3 4 9 4 4 9-7" fill="none" stroke="#cb5a94" strokeWidth="2.600" />
  </svg>
);
const RecorderIcon = () => (
  <svg width="57" height="54" viewBox="0 0 57 54">
    <rect y="3" width="57" height="51" fill="#a9a9a9" />
    <rect y="3" width="57" height="14" fill="#a0a0a0" />
    <path d="M10 19v26h6M10 28h6" stroke="#979797" strokeWidth="2" fill="none" />
    <path d="M15 22h6l2 3h4v8H15zM15 38h6l2 3h4v6H15z" fill="#8b8b8b" />
  </svg>
);
const ShieldIcon = () => (
  <svg width="45" height="54" viewBox="0 0 45 54">
    <defs>
      <linearGradient id="sg" x1="0" y1="0" x2="0.800" y2="1"><stop offset="0" stopColor="#ececec" /><stop offset="0.400" stopColor="#b4b4b4" /><stop offset="1" stopColor="#747474" /></linearGradient>
      <radialGradient id="sh" cx="0.450" cy="0.300" r="0.750"><stop offset="0" stopColor="#04bf04" /><stop offset="1" stopColor="#067306" /></radialGradient>
      <filter id="soft" x="-10%" y="-10%" width="120%" height="120%"><feGaussianBlur stdDeviation="1" /></filter>
    </defs>
    <path d="M22.500 2Q28 8 42 11V24Q42 42 29 51h-13Q3 42 3 24V11Q17 8 22.500 2z" fill="url(#sg)" filter="url(#soft)" />
    <path d="M22.500 6Q29 11.500 38.500 13.500v11q0 16-12 23h-8q-12-7-12-23v-11q9.500-2 16-7.500z" fill="#d2d2d2" />
    <path d="M22.500 11q6 5.500 16 6.500V24q0 13-16 21Q6.500 37 6.500 24v-6.500q10-1 16-6.500z" fill="url(#sh)" />
    <path d="M15.500 27l5 6.500 10.500-12" fill="none" stroke="#f4fbf4" strokeWidth="3.600" />
  </svg>
);

const Tri = ({ dir }) => {
  const d = { up: "M0 8L9 -1 18 8z", down: "M0 0h18L9 9z", left: "M8 0v16L0 8z", right: "M0 0v17L8 8.500z" }[dir];
  const v = dir === "up" || dir === "down";
  return <svg width={v ? 18 : 8} height={v ? 8 : 17}><path d={d} /></svg>;
};
const ArrowPair = styled.span`
  display: flex;
  gap: 18px;
`;

const TOOLS = [
  [NewIcon, TemplatesIcon, OpenIcon, SaveIcon],
  [CutIcon, CopyIcon, PasteIcon],
  [PlusIcon, MinusIcon, ToggleIcon],
  [RunIcon, RunNowIcon, StopIcon, ShutdownIcon],
  [ClearIcon, ClearAllIcon],
  [FindIcon, BroomIcon],
  [FunctionsIcon, HelpIcon],
];
const MENU = [["File", 93], ["Edit", 99], ["Search", 141], ["Run", 99], ["Options", 166], ["Tools", 122], ["Help", 90]];
const PLAN = [
  { label: "User Defined Variables", Icon: ToolsIcon, ls: -0.2 },
  { label: "HTTP Request Defaults", Icon: ToolsIcon },
  { label: "HTTP Cookie Manager", Icon: ToolsIcon },
  { label: "Thread Group", Icon: ThreadIcon, plus: true },
  { label: "View Results Tree", Icon: ChartIcon, selected: true },
  { label: "HTTP(S) Test Script Recorder", Icon: RecorderIcon, plus: true, muted: true, part: "last", ls: 0 },
];
const SAMPLES = [
  { label: "Generate Code Verifier and Code Challenge", part: "first", ls: -0.32 },
  { label: "Authorize" },
  { label: "SelfAsserted" },
  { label: "CombinedSigninAndSignup", plus: true, ls: -0.16 },
  { label: "Token", part: "last" },
];

export default function App() {
  return (
    <Window>
      <Global />
      <MenuBar>
        {MENU.map(([t, w]) => <MenuItem key={t} $w={w}>{t}</MenuItem>)}
      </MenuBar>
      <ToolBar>
        {TOOLS.map((group, i) => (
          <React.Fragment key={i}>
            {i > 0 && <ToolSeparator />}
            <ToolGroup>
              {group.map((Icon, j) => <ToolButton key={j}><Icon /></ToolButton>)}
            </ToolGroup>
          </React.Fragment>
        ))}
      </ToolBar>
      <Main>
        <TreePane>
          <TreeScroll>
            <TreeRow $indent={5}>
              <RootGutter $w={53} $reach={28} $part="none"><Expander $open /></RootGutter>
              <FlaskIcon />
              <NodeLabel $gap={13}>Test Plan</NodeLabel>
            </TreeRow>
            {PLAN.map(({ label, Icon, plus, selected, muted, part, ls }) => (
              <TreeRow key={label} $indent={62}>
                <Gutter $w={46} $reach={31} $part={part}>{plus && <Expander />}</Gutter>
                <Icon />
                {selected ? <SelectedLabel>{label}</SelectedLabel> : <NodeLabel $muted={muted} $ls={ls}>{label}</NodeLabel>}
              </TreeRow>
            ))}
          </TreeScroll>
        </TreePane>
        <Detail>
          <DetailEdge />
          <DetailBody>
            <Title>View Results Tree</Title>
            <FormRow $h={60} $mb={21}>
              <FormLabel>Name:</FormLabel>
              <Field $h={60}>View Results Tree</Field>
            </FormRow>
            <FormRow $h={72} $mb={32}>
              <FormLabel $drop={7}>Comments:</FormLabel>
              <Field $h={72} />
            </FormRow>
            <Group>
              <GroupHead>
                <Rule $w={15} />
                <GroupTitle>Write results to file / Read from file</GroupTitle>
                <Rule />
              </GroupHead>
              <GroupBody>
                <Cell $w={145}>Filename</Cell>
                <Field $h={69} $w={729} $mr={15} />
                <PushButton $w={212} $h={62} $mr={16} $small>Browse...</PushButton>
                <Cell $w={281}>Log/Display Only:</Cell>
                <Check />
              </GroupBody>
            </Group>
            <Splitter $h={21} $line={7} $pad={6}><ArrowPair><Tri dir="up" /><Tri dir="down" /></ArrowPair></Splitter>
            <SearchBar>
              <Cell $w={105} $small>Search:</Cell>
              <Field $h={54} $w={498} $mr={26} />
              <Check $mr={13} />
              <Cell $w={206} $small>Case sensitive</Cell>
              <Check $mr={13} />
              <Cell $w={177} $small>Regular exp.</Cell>
              <PushButton $w={200} $h={68} $mr={16}>Search</PushButton>
              <PushButton $w={180} $h={68} $mr={0}>Reset</PushButton>
            </SearchBar>
            <Splitter $h={14} $line={0} $pad={10}><ArrowPair><Tri dir="up" /><Tri dir="down" /></ArrowPair></Splitter>
            <Results>
              <ResultList>
                <Combo>
                  <span>Text</span>
                  <ComboButton><svg width="24" height="12"><path d="M0 0h24L12 12z" fill={C.dark} /></svg></ComboButton>
                </Combo>
                <ResultTree>
                  <ResultClip>
                    {SAMPLES.map(({ label, plus, part, ls }) => (
                      <TreeRow key={label} $indent={17}>
                        <Gutter $w={52} $reach={28} $part={part}>{plus && <Expander />}</Gutter>
                        <ShieldIcon />
                        <NodeLabel $gap={14} $ls={ls}>{label}</NodeLabel>
                      </TreeRow>
                    ))}
                  </ResultClip>
                </ResultTree>
              </ResultList>
              <SideSplitter><Tri dir="left" /><Tri dir="right" /></SideSplitter>
              <Sampler>
                <TabStrip>
                  <Tab>Sampler result</Tab>
                  <TabRest />
                </TabStrip>
                <TabBody />
              </Sampler>
            </Results>
          </DetailBody>
        </Detail>
      </Main>
      <Callout $x={157} $y={436} $w={310} $h={96} />
      <Callout $x={827} $y={713} $w={696} $h={496} />
    </Window>
  );
}
